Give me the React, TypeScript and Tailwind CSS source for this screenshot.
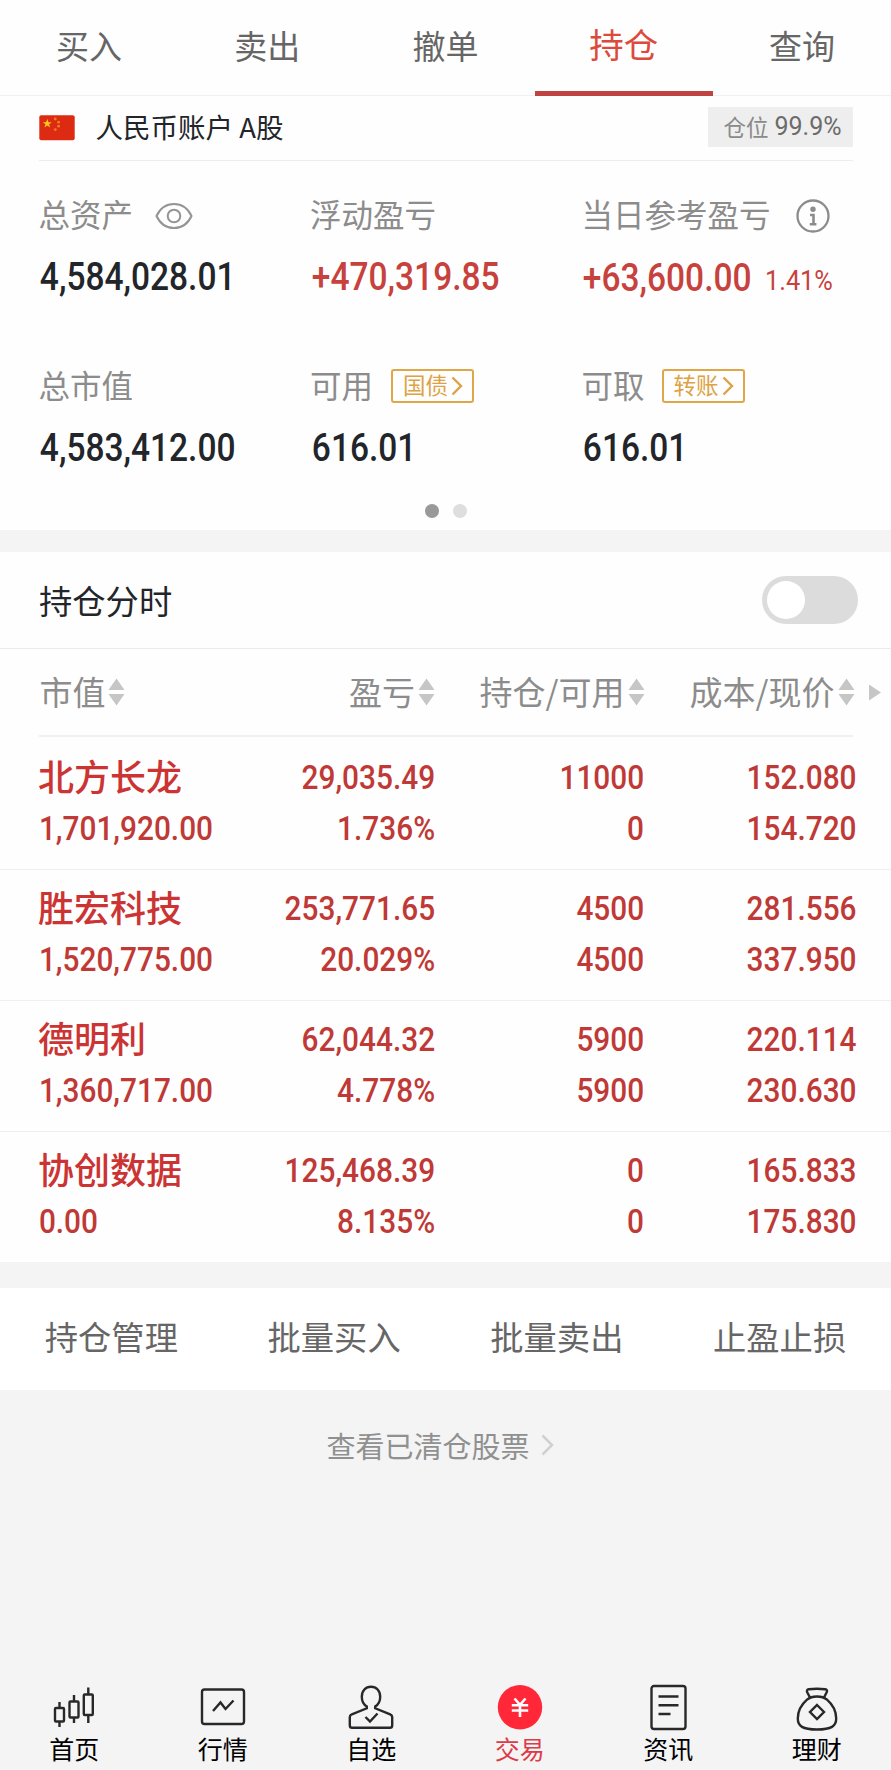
import type { ReactNode } from "react";

const tabs = ["买入", "卖出", "撤单", "持仓", "查询"];
const actions = ["持仓管理", "批量买入", "批量卖出", "止盈止损"];

const holdings = [
  { name: "北方长龙", value: "1,701,920.00", profit: "29,035.49", rate: "1.736%", held: "11000", usable: "0", cost: "152.080", price: "154.720" },
  { name: "胜宏科技", value: "1,520,775.00", profit: "253,771.65", rate: "20.029%", held: "4500", usable: "4500", cost: "281.556", price: "337.950" },
  { name: "德明利", value: "1,360,717.00", profit: "62,044.32", rate: "4.778%", held: "5900", usable: "5900", cost: "220.114", price: "230.630" },
  { name: "协创数据", value: "0.00", profit: "125,468.39", rate: "8.135%", held: "0", usable: "0", cost: "165.833", price: "175.830" },
];

function Flag() {
  return (
    <svg width="36" height="26" viewBox="0 0 36 26" className="shrink-0">
      <rect x="0.3" y="0.3" width="35.4" height="25" rx="2" fill="#dd2a12" />
      <path d="M8.3 4l1.2 3.2h3.3l-2.700 2 1 3.300-2.800-2-2.800 2 1-3.300-2.700-2h3.300z" fill="#fbc91c" />
      <g fill="#ee7f1c">
        <circle cx="16.3" cy="4" r="1.4" />
        <circle cx="19.6" cy="7.2" r="1.4" />
        <circle cx="19.6" cy="11.2" r="1.4" />
        <circle cx="16.3" cy="14.6" r="1.4" />
      </g>
    </svg>
  );
}

function Eye() {
  return (
    <svg width="38" height="28" viewBox="0 0 38 28" fill="none" stroke="#949494" strokeWidth="2">
      <path d="M1.500 14C5 6.500 11 2 19 2s14 4.500 17.500 12C33 21.500 27 26 19 26S5 21.500 1.500 14z" />
      <circle cx="19" cy="14" r="6.300" />
    </svg>
  );
}

function Info() {
  return (
    <svg width="34" height="34" viewBox="0 0 34 34" fill="none" stroke="#8c8c8c">
      <circle cx="17" cy="17" r="15.500" strokeWidth="2.300" />
      <circle cx="17" cy="10.300" r="2.700" fill="#8c8c8c" stroke="none" />
      <path d="M14 16h3.500v9M13.800 25.200h6.600" strokeWidth="2.600" />
    </svg>
  );
}

function SortArrows() {
  return (
    <svg width="17" height="28" viewBox="0 0 17 28" fill="#c6c6c6" className="shrink-0">
      <path d="M8.500 0.500L16.500 12H.5zM8.500 27.500L16.500 16H.5z" />
    </svg>
  );
}

function Tag({ children }: { children: ReactNode }) {
  return (
    <span className="flex h-[34px] w-[83px] items-center rounded-[3px] border-[2.500px] border-[#dfa748] pl-[10px] text-[22.500px] leading-none text-[#dda244]">
      <span className="-mt-[3px]">{children}</span>
      <svg width="12" height="20" viewBox="0 0 12 20" fill="none" stroke="#dda244" strokeWidth="2.400" className="ml-[3px]">
        <path d="M1.500 1.500L10 10l-8.500 8.500" />
      </svg>
    </span>
  );
}

function Stat({ label, extra, children }: { label: string; extra?: ReactNode; children: ReactNode }) {
  return (
    <div className="w-[271.5px] whitespace-nowrap">
      <div className="flex h-[40px] items-center text-[31.5px] leading-[40px] text-[#8c8c8c]">
        <span className="-mt-[5px]">{label}</span>
        {extra}
      </div>
      <div className="mt-[22px] flex h-[40px] items-center">{children}</div>
    </div>
  );
}

function Amount({ children }: { children: ReactNode }) {
  return (
    <span className="inline-block origin-left scale-x-[0.87] pl-px font-['Roboto'] text-[38.5px] leading-[40px] font-medium">{children}</span>
  );
}

function Pair({ top, bottom, width }: { top: string; bottom: string; width: string }) {
  return (
    <div className={`flex flex-col items-end font-['Roboto'] text-[33.5px] font-medium ${width}`}>
      <span className="origin-right scale-x-[0.89] leading-[50.5px]">{top}</span>
      <span className="origin-right scale-x-[0.89] leading-[50.5px]">{bottom}</span>
    </div>
  );
}

const navItems = [
  {
    label: "首页",
    icon: (
      <g>
        <path d="M9.500 18v6M9.500 38v5M24 11v6M24 34v5M38.300 3.500v7M38.300 31v8" />
        <rect x="5" y="24" width="9" height="13.500" rx="1" />
        <rect x="19.500" y="17.500" width="9" height="16" rx="1" />
        <rect x="33.800" y="10.500" width="9" height="20.500" rx="1" />
      </g>
    ),
  },
  {
    label: "行情",
    icon: (
      <g>
        <rect x="3" y="5.500" width="42" height="34.500" rx="2.500" />
        <path d="M14 27l7.500-8.500 5 6.500 8-8.500" />
      </g>
    ),
  },
  {
    label: "自选",
    icon: (
      <g>
        <path d="M19.800 24.300v-1.800c-3.600-2.300-5-5.500-5-9.800 0-6 3.800-10 9.200-10s9.200 4 9.200 10c0 4.300-1.400 7.500-5 9.800v1.800l15 6c1.600.6 2 1.200 2 2.700v8.500c0 1.700-.6 2.300-2.300 2.300H5.100c-1.700 0-2.300-.6-2.300-2.300V33c0-1.500.4-2.100 2-2.700z" />
        <path d="M18.500 33l4.500 4.500 7.500-8" />
      </g>
    ),
  },
  {
    label: "交易",
    icon: (
      <g>
        <circle cx="24" cy="23.200" r="22.200" fill="#ff2738" stroke="none" />
        <path d="M18.500 14.500l5.500 6.300 5.500-6.300M15.800 21.200h16.400M15.800 26.500h16.400M24 20.500v12.500" stroke="#fff" strokeWidth="2.600" />
      </g>
    ),
  },
  {
    label: "资讯",
    icon: (
      <g>
        <rect x="7.500" y="2" width="34" height="43" rx="2.500" />
        <path d="M14.500 12.500h20M14.500 21.300h20M14.500 30h12" />
      </g>
    ),
  },
  {
    label: "理财",
    icon: (
      <g>
        <path d="M17 13.500l-2.800-5.300c-.7-1.600-.1-2.700 1.500-2.900 5.500-.7 11-.7 16.500 0 1.700.2 2.300 1.300 1.500 2.900L31 13.500" />
        <path d="M24 12.500c-3.500 0-7 .6-10 3.200C8.500 20.500 4.800 27.500 4.800 34.500c0 7.600 4.800 11 19.200 11s19.200-3.400 19.200-11c0-7-3.700-14-9.200-18.800-3-2.600-6.500-3.200-10-3.200z" />
        <path d="M24 21l7 7-7 7-7-7z" />
      </g>
    ),
  },
];

export default function App() {
  return (
    <div className="flex h-[1770px] w-[891px] flex-col overflow-hidden bg-[#f4f4f4] font-['Noto_Sans_CJK_SC',sans-serif]">
      <section className="h-[530px] bg-[#fefefe]">
        <nav className="grid h-[96px] grid-cols-5 border-b border-[#f1f1f1] text-center text-[33px] text-[#666]">
          {tabs.map((tab) =>
            tab === "持仓" ? (
              <div key={tab} className="h-[96px] border-b-[5px] border-[#c04343] text-[34.5px] leading-[86px] text-[#dc4a3c]">
                {tab}
              </div>
            ) : (
              <div key={tab} className="leading-[91px]">
                {tab}
              </div>
            )
          )}
        </nav>

        <div className="mx-[38.5px] flex h-[65px] items-center border-b border-[#ededed]">
          <Flag />
          <span className="-mt-[4px] ml-[21px] text-[27.5px] leading-[40px] text-[#222529]">人民币账户 A股</span>
          <div className="-mt-[2px] ml-auto flex h-[40px] w-[145px] items-center bg-[#eeeeee] pl-[16px] text-[22.5px] leading-[40px] text-[#8a8a8a]">
            <span className="-mt-[3px]">仓位</span>
            <span className="ml-[6px] font-['Roboto'] text-[25px] text-[#6b6b6b]">99.9%</span>
          </div>
        </div>

        <div className="flex pt-[34px] pl-[38.5px] text-[#222529]">
          <Stat label="总资产" extra={<span className="mt-[2px] ml-[22px]"><Eye /></span>}>
            <Amount>4,584,028.01</Amount>
          </Stat>
          <Stat label="浮动盈亏">
            <span className="ml-px text-[#c7413d]"><Amount>+470,319.85</Amount></span>
          </Stat>
          <Stat label="当日参考盈亏" extra={<span className="mt-[2px] ml-[25px]"><Info /></span>}>
            <span className="mt-[2px] w-[183px] text-[#c7413d]"><Amount>+63,600.00</Amount></span>
            <span className="mt-[7px] origin-left scale-x-[0.92] font-['Roboto'] text-[27.5px] text-[#c7413d]">1.41%</span>
          </Stat>
        </div>
        <div className="flex pt-[69px] pl-[38.5px] text-[#222529]">
          <Stat label="总市值">
            <Amount>4,583,412.00</Amount>
          </Stat>
          <Stat label="可用" extra={<span className="ml-[18px]"><Tag>国债</Tag></span>}>
            <span className="ml-px"><Amount>616.01</Amount></span>
          </Stat>
          <Stat label="可取" extra={<span className="ml-[17px]"><Tag>转账</Tag></span>}>
            <Amount>616.01</Amount>
          </Stat>
        </div>
        <div className="mt-[36px] flex justify-center gap-[14px]">
          <span className="size-[14px] rounded-full bg-[#999]" />
          <span className="size-[14px] rounded-full bg-[#dedede]" />
        </div>
      </section>

      <section className="mt-[22px] bg-[#fefefe]">
        <div className="flex h-[97px] items-center justify-between border-b border-[#ebebeb] pr-[33px] pl-[39px]">
          <span className="text-[33.3px] leading-[50px] text-[#222529]">持仓分时</span>
          <button aria-label="持仓分时" className="flex h-[48px] w-[96.5px] items-center rounded-full bg-[#dcdcdc] pl-[5px]">
            <span className="size-[38px] rounded-full bg-white" />
          </button>
        </div>

        <div className="flex h-[86px] items-center text-[33px] leading-[50px] whitespace-nowrap text-[#8c8c8c]">
          <div className="flex w-[226px] items-center gap-[2px] pl-[39.5px]"><span className="-mt-[3px]">市值</span><SortArrows /></div>
          <div className="flex w-[209px] items-center justify-end gap-[3px]"><span className="-mt-[3px]">盈亏</span><SortArrows /></div>
          <div className="flex w-[209.5px] items-center justify-end gap-[3px]"><span className="-mt-[3px]">持仓/可用</span><SortArrows /></div>
          <div className="flex w-[210px] items-center justify-end gap-[3px]"><span className="-mt-[3px]">成本/现价</span><SortArrows /></div>
          <svg width="12" height="17" viewBox="0 0 12 17" fill="#c6c6c6" className="ml-[14px]">
            <path d="M0 0.500L12 8.500L0 16.500z" />
          </svg>
        </div>
        <div className="mx-[38.5px] h-[2px] bg-[#f1f1f1]" />

        {holdings.map((h) => (
          <div
            key={h.name}
            className="flex h-[131px] border-b border-[#efefef] pt-[14px] text-[#bf3936] first-of-type:border-0 last:h-[130px] last:border-0 nth-[4]:h-[133px] nth-[4]:pt-[16px]"
          >
            <div className="w-[226px] pl-[38px] whitespace-nowrap">
              <div className="h-[50.5px] text-[36px] leading-[44px] font-medium text-[#cb3433]">{h.name}</div>
              <div className="origin-left scale-x-[0.89] pl-px font-['Roboto'] text-[33.5px] leading-[50.5px] font-medium">{h.value}</div>
            </div>
            <Pair top={h.profit} bottom={h.rate} width="w-[209.500px]" />
            <Pair top={h.held} bottom={h.usable} width="w-[209px]" />
            <Pair top={h.cost} bottom={h.price} width="w-[212px]" />
          </div>
        ))}
      </section>

      <section className="mt-[26px] grid h-[102px] grid-cols-4 bg-white text-center text-[33.3px] leading-[96px] text-[#666]">
        {actions.map((a) => (
          <div key={a}>{a}</div>
        ))}
      </section>

      <div className="mt-[33px] flex h-[44px] items-center justify-center pr-[11px] text-[29px] leading-[40px] text-[#909090]">
        查看已清仓股票
        <svg width="13" height="22" viewBox="0 0 13 22" fill="none" stroke="#d0d0d0" strokeWidth="2.500" className="ml-[11px]">
          <path d="M1.500 1.500L11 11l-9.500 9.500" />
        </svg>
      </div>

      <footer className="mt-auto grid h-[86px] grid-cols-6">
        {navItems.map((item) => (
          <div key={item.label} className="flex flex-col items-center">
            <svg width="48" height="48" viewBox="0 0 48 48" fill="none" stroke="#282828" strokeWidth="2.400">
              {item.icon}
            </svg>
            <span className={`text-[25px] leading-[32px] ${item.label === "交易" ? "text-[#dc3c49]" : "text-black"}`}>{item.label}</span>
          </div>
        ))}
      </footer>
    </div>
  );
}
